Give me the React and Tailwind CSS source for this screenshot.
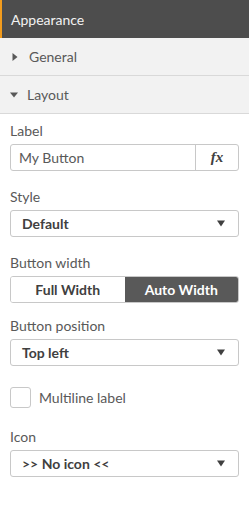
import { useState } from "react";

function Caret({ open }) {
  return (
    <svg width="8" height="8" viewBox="0 0 8 8" className="shrink-0">
      {open ? (
        <path d="M0 1.5h8L4 6.5z" fill="#595959" />
      ) : (
        <path d="M1.5 0v8L6.5 4z" fill="#595959" />
      )}
    </svg>
  );
}

function Select({ value }) {
  return (
    <div className="flex h-[27px] items-center justify-between rounded-[3px] border border-[#c8c8c8] bg-white pl-[11px] pr-[13px]">
      <span className="text-[14px] font-bold text-[#404040]">{value}</span>
      <svg width="8" height="7" viewBox="0 0 8 7">
        <path d="M0 0.5h8L4 6.5z" fill="#404040" />
      </svg>
    </div>
  );
}

function Field({ label, className = "", children }) {
  return (
    <div className={`flex flex-col gap-[3px] ${className}`}>
      <div className="text-[14px] leading-[20px] text-[#595959]">{label}</div>
      {children}
    </div>
  );
}

export default function App() {
  const [width, setWidth] = useState("auto");
  const [multi, setMulti] = useState(false);

  return (
    <div className="h-[518px] w-[249px] bg-white font-['Lato',sans-serif]">
      <div className="flex h-[38px] items-center border-l-2 border-[#f39c1d] bg-[#4d4d4d] pl-[9px] text-[14px] text-[#f2f2f2]">
        Appearance
      </div>
      <div className="flex h-[38px] items-center gap-[10px] border-b border-[#d9d9d9] bg-[#f2f2f2] pl-[11px] text-[14px] text-[#595959]">
        <Caret />
        General
      </div>
      <div className="flex h-[38px] items-center gap-[9px] border-b border-[#d9d9d9] bg-[#f2f2f2] pl-[10px] text-[14px] text-[#595959]">
        <Caret open />
        Layout
      </div>

      <div className="flex flex-col px-[10px] pt-[7px]">
        <Field label="Label">
          <div className="flex h-[27px] rounded-[3px] border border-[#c8c8c8] bg-white">
            <input
              defaultValue="My Button"
              className="min-w-0 flex-1 bg-transparent pl-[8px] text-[14px] text-[#595959] outline-none"
            />
            <div className="flex w-[43px] items-center justify-center border-l border-[#c8c8c8] font-['Liberation_Serif',serif] text-[15px] font-bold italic text-[#404040]">
              fx
            </div>
          </div>
        </Field>

        <Field label="Style" className="mt-[16px]">
          <Select value="Default" />
        </Field>

        <Field label="Button width" className="mt-[16px]">
          <div className="flex h-[27px] overflow-hidden rounded-[3px] border border-[#c8c8c8] text-[14px] font-bold">
            <button
              onClick={() => setWidth("full")}
              className={`flex-1 ${width === "full" ? "bg-[#595959] text-white" : "bg-white text-[#404040]"}`}
            >
              Full Width
            </button>
            <button
              onClick={() => setWidth("auto")}
              className={`flex-1 ${width === "auto" ? "bg-[#595959] text-white" : "bg-white text-[#404040]"}`}
            >
              Auto Width
            </button>
          </div>
        </Field>

        <Field label="Button position" className="mt-[13px]">
          <Select value="Top left" />
        </Field>

        <label className="mt-[21px] flex items-center gap-[8px]">
          <button
            onClick={() => setMulti(!multi)}
            className="h-[21px] w-[21px] rounded-[3px] border border-[#c8c8c8] bg-white"
          />
          <span className="text-[14px] text-[#595959]">Multiline label</span>
        </label>

        <Field label="Icon" className="mt-[19px]">
          <Select value=">> No icon <<" />
        </Field>
      </div>
    </div>
  );
}
